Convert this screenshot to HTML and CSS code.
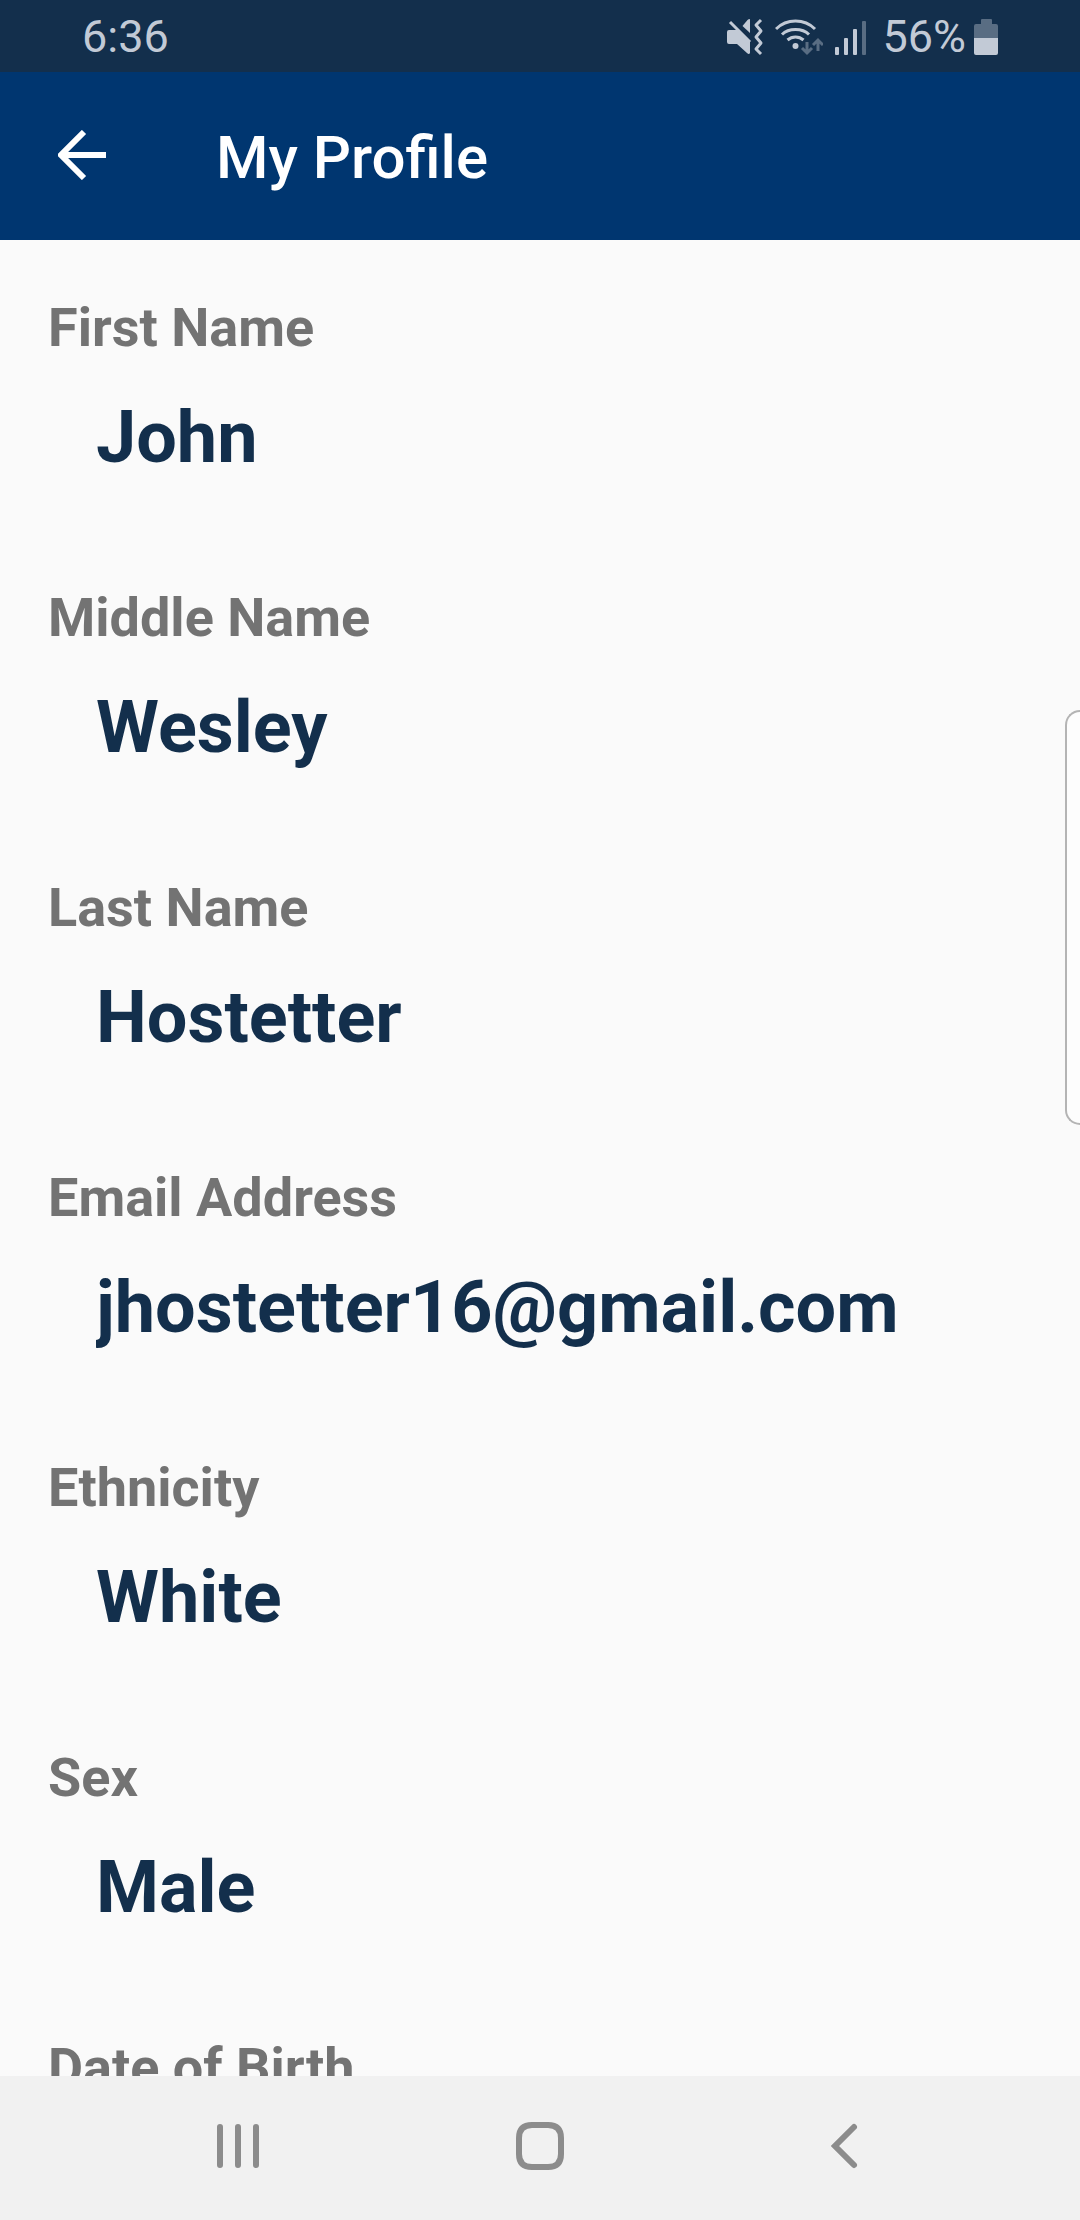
FILE: index.html
```html
<!DOCTYPE html>
<html lang="en">
<head>
<meta charset="utf-8">
<meta name="viewport" content="width=device-width, initial-scale=1">
<title>My Profile</title>
<link rel="stylesheet" href="styles.css">
</head>
<body class="screen">
  <div class="status">
    <time class="status-time">6:36</time>
    <div class="status-icons">
      <svg width="36" height="38" viewBox="0 0 36 38" fill="currentColor" role="img" aria-label="Vibrate">
        <path d="M2 12h8l13 12v11q-1 2-3 0L10 26H2q-2 0-2-2V14q0-2 2-2z"/>
        <path d="M15.500 8l5-6q2.500-2 2.500 0v13z"/>
        <path d="M3 4l20 20" fill="none" stroke="currentColor" stroke-width="3"/>
        <path d="M34 2l-5 5 5 6-5 6 5 6-5 6 5 5" fill="none" stroke="currentColor" stroke-width="3" stroke-linejoin="round"/>
      </svg>
      <svg width="48" height="38" viewBox="0 0 48 38" role="img" aria-label="Wi-Fi">
        <g fill="none" stroke="currentColor" stroke-width="3">
          <path d="M1 11Q9 3 20.500 3T40 11"/>
          <path d="M7 16.500Q12 11.500 20.500 11.500T34 16.500"/>
          <path d="M12.500 22Q16 19 20.500 19T28.500 22"/>
        </g>
        <circle cx="20.500" cy="28" r="3" fill="currentColor"/>
        <g class="dim" fill="none" stroke="currentColor" stroke-width="3">
          <path d="M32 24v11M27 30l5 5 5-5M43 33V22M38 27l5-5 5 5"/>
        </g>
      </svg>
      <svg width="32" height="38" viewBox="0 0 32 38" fill="currentColor" role="img" aria-label="Signal">
        <rect x="0" y="29" width="4" height="8" rx="1"/>
        <rect x="9" y="20" width="4" height="17" rx="1"/>
        <rect x="18" y="11" width="4" height="26" rx="1"/>
        <rect class="dim" x="27" y="3" width="4" height="34" rx="1"/>
      </svg>
      <span class="battery">
        56%
        <svg width="24" height="38" viewBox="0 0 24 38" fill="currentColor" aria-hidden="true">
          <path class="dim" d="M7 2q0-1 1-1h9q1 0 1 1v4h4q2 0 2 2v12H0V8q0-2 2-2h5z"/>
          <path d="M0 20h24v15q0 2-2 2H2q-2 0-2-2z"/>
        </svg>
      </span>
    </div>
  </div>

  <header class="app-bar">
    <button class="icon-button" type="button" aria-label="Back">
      <svg width="48" height="50" viewBox="0 0 48 50" fill="none" stroke="currentColor" stroke-width="6">
        <path d="M26 2L3 25l23 23M2 25h46"/>
      </svg>
    </button>
    <h1 class="title">My Profile</h1>
  </header>

  <main class="content">
    <dl class="fields">
      <div class="field"><dt>First Name</dt><dd>John</dd></div>
      <div class="field"><dt>Middle Name</dt><dd>Wesley</dd></div>
      <div class="field"><dt>Last Name</dt><dd>Hostetter</dd></div>
      <div class="field"><dt>Email Address</dt><dd>jhostetter16@gmail.com</dd></div>
      <div class="field"><dt>Ethnicity</dt><dd>White</dd></div>
      <div class="field"><dt>Sex</dt><dd>Male</dd></div>
      <div class="field"><dt>Date of Birth</dt></div>
    </dl>
  </main>

  <nav class="nav" aria-label="System">
    <button class="icon-button" type="button" aria-label="Recent apps">
      <svg width="48" height="48" viewBox="0 0 48 48" fill="none" stroke="currentColor" stroke-width="6" stroke-linecap="round">
        <path d="M6 5v38M24 5v38M42 5v38"/>
      </svg>
    </button>
    <button class="icon-button" type="button" aria-label="Home">
      <svg width="48" height="48" viewBox="0 0 48 48" fill="none" stroke="currentColor" stroke-width="6">
        <path d="M16 3h16q13 0 13 13v16q0 13-13 13H16Q3 45 3 32V16Q3 3 16 3z"/>
      </svg>
    </button>
    <button class="icon-button" type="button" aria-label="Back">
      <svg width="48" height="48" viewBox="0 0 48 48" fill="none" stroke="currentColor" stroke-width="6" stroke-linecap="round">
        <path d="M36 5L17 24l19 19"/>
      </svg>
    </button>
  </nav>

  <div class="edge-handle"></div>
</body>
</html>
```
FILE: styles.css
```css
* {
  box-sizing: border-box;
}

.screen {
  position: relative;
  display: flex;
  flex-direction: column;
  height: 100vh;
  margin: 0;
  overflow: hidden;
  background: #fafafa;
  font-family: Roboto, sans-serif;
}

.status {
  flex: none;
  display: flex;
  align-items: center;
  justify-content: space-between;
  padding: 2px 82px 0;
  background: #132f4c;
  color: #c2cad6;
  font-size: 45px;
  line-height: 70px;
}

.status svg {
  display: block;
}

.status-icons {
  display: flex;
  align-items: center;
  gap: 12px;
}

.battery {
  display: flex;
  align-items: center;
  gap: 8px;
  padding-left: 3px;
}

.dim {
  opacity: 0.4;
}

.app-bar {
  flex: none;
  display: flex;
  align-items: center;
  gap: 110px;
  height: 168px;
  padding: 4px 58px 0;
  background: #003670;
  color: #fff;
}

.icon-button {
  display: flex;
  align-items: center;
  justify-content: center;
  padding: 0;
  border: 0;
  background: none;
  color: inherit;
}

.app-bar .icon-button {
  padding-bottom: 6px;
}

.title {
  margin: 0;
  font-size: 60px;
  font-weight: 500;
  line-height: 70px;
}

.content {
  flex: 1;
  min-height: 0;
  padding: 56px 48px 0;
  overflow-y: auto;
  scrollbar-width: none;
}

.fields {
  display: flex;
  flex-direction: column;
  gap: 106px;
  margin: 0;
}

.field {
  display: flex;
  flex-direction: column;
  gap: 36px;
  font-weight: 700;
}

.field dt {
  color: #737373;
  font-size: 54px;
  line-height: 64px;
}

.field dd {
  margin: 0 0 0 48px;
  overflow: clip;
  color: #132f4c;
  font-size: 72px;
  line-height: 84px;
}

.nav {
  flex: none;
  display: grid;
  grid-template-columns: repeat(3, 1fr);
  height: 144px;
  padding: 0 8% 4px;
  background: #f1f1f1;
  color: #8c8c8c;
}

.edge-handle {
  position: absolute;
  top: 32%;
  right: 0;
  width: 15px;
  height: 415px;
  border: 2px solid #b4b4b4;
  border-right: 0;
  border-radius: 18px 0 0 18px;
  background: #fdfdfd;
}
```
